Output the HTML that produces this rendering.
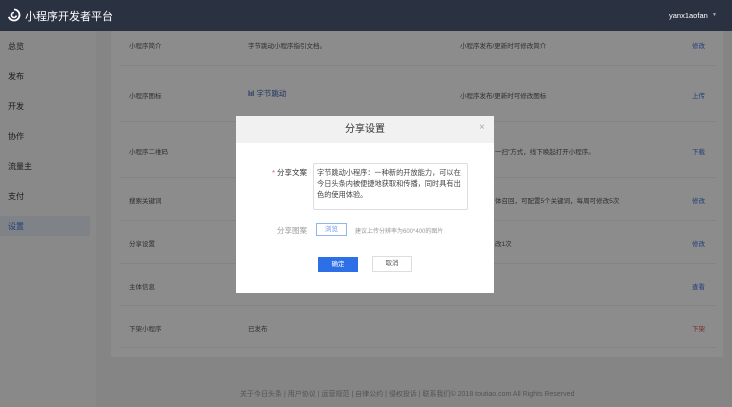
<!DOCTYPE html>
<html><head><meta charset="utf-8"><style>
*{margin:0;padding:0;box-sizing:border-box}
body{width:732px;height:407px;overflow:hidden;position:relative;background:#f2f2f2;font-family:"Liberation Sans","Noto Sans CJK SC",sans-serif;font-size:7px;color:#333}
.hd{position:absolute;left:0;top:0;width:732px;height:31px;background:#2a3242;color:#fff;z-index:5}
.side{position:absolute;left:0;top:31px;width:96px;height:376px;background:#fafafa}
.side div{position:absolute;left:8px;font-size:8px;color:#333}
.panel{position:absolute;left:111px;top:31px;width:612px;height:326px;background:#fff}
.row{position:absolute;left:9px;width:596px;border-bottom:1px solid #eee}
.t{position:absolute;font-size:6.5px;color:#555;white-space:nowrap}
.a{position:absolute;font-size:6.5px;color:#3b73d9}
.ov{position:absolute;left:0;top:0;width:732px;height:407px;background:rgba(0,0,0,.45)}
.m{position:absolute;left:236px;top:116px;width:258px;height:177px;background:#fff}
</style></head><body>
<div class="hd">
<svg style="position:absolute;left:7px;top:8px" width="14" height="14" viewBox="0 0 14 14"><path d="M7 1.5A5.5 5.5 0 1 1 1.8 8.8" fill="none" stroke="#fff" stroke-width="1.8"/><path d="M7 4.5A2.5 2.5 0 1 0 9.4 7.6" fill="none" stroke="#fff" stroke-width="1.6"/></svg>
<div style="position:absolute;left:25px;top:8px;font-size:11px">小程序开发者平台</div>
<div style="position:absolute;left:669px;top:11px;font-size:7.5px">yanx1aofan</div>
<div style="position:absolute;left:712px;top:12px;font-size:5px;color:#aaa">▼</div>
</div>
<div class="side">
<div style="top:10px">总览</div><div style="top:40px">发布</div><div style="top:70px">开发</div><div style="top:100px">协作</div><div style="top:130px">流量主</div><div style="top:160px">支付</div>
<div style="left:0;top:185px;width:90px;height:20px;background:#e8eef8"></div>
<div style="top:190px;color:#3b73d9">设置</div>
</div>
<div class="panel">
<div class="row" style="top:0;height:35px"></div>
<div class="row" style="top:35px;height:56px"></div>
<div class="row" style="top:91px;height:56px"></div>
<div class="row" style="top:147px;height:43px"></div>
<div class="row" style="top:190px;height:43px"></div>
<div class="row" style="top:233px;height:42px"></div>
<div class="row" style="top:275px;height:42px"></div>
<div class="t" style="left:18px;top:9px">小程序简介</div><div class="t" style="left:137px;top:9px">字节跳动小程序指引文档。</div><div class="t" style="left:349px;top:9px">小程序发布/更新时可修改简介</div><div class="a" style="left:581px;top:9px">修改</div>
<div class="t" style="left:18px;top:59px">小程序图标</div><div class="t" style="left:137px;top:57px;color:#3b5fb0;font-size:7.5px"><b>lıl</b> 字节跳动</div><div class="t" style="left:349px;top:59px">小程序发布/更新时可修改图标</div><div class="a" style="left:581px;top:59px">上传</div>
<div class="t" style="left:18px;top:115px">小程序二维码</div><div class="t" style="left:384px;top:115px">一扫"方式，线下唤起打开小程序。</div><div class="a" style="left:581px;top:115px">下载</div>
<div class="t" style="left:18px;top:164px">搜索关键词</div><div class="t" style="left:384px;top:164px">体召回，可配置5个关键词，每周可修改5次</div><div class="a" style="left:581px;top:164px">修改</div>
<div class="t" style="left:18px;top:207px">分享设置</div><div class="t" style="left:384px;top:207px">改1次</div><div class="a" style="left:581px;top:207px">修改</div>
<div class="t" style="left:18px;top:250px">主体信息</div><div class="a" style="left:581px;top:250px">查看</div>
<div class="t" style="left:18px;top:292px">下架小程序</div><div class="t" style="left:137px;top:292px">已发布</div><div class="a" style="left:581px;top:292px;color:#e05050">下架</div>
</div>
<div class="t" style="left:240px;top:389px;color:#999;font-size:7px">关于今日头条 | 用户协议 | 运营规范 | 自律公约 | 侵权投诉 | 联系我们© 2018 toutiao.com All Rights Reserved</div>
<div class="ov"></div>
<div class="m">
<div style="position:absolute;left:0;top:0;width:258px;height:27px;background:#f1f1f1;text-align:center;line-height:27px;font-size:10px;color:#333">分享设置</div>
<div style="position:absolute;left:243px;top:6px;font-size:10px;color:#aaa">×</div>
<div style="position:absolute;left:36px;top:51px;font-size:7.5px;color:#333"><span style="color:#e05050">*</span> 分享文案</div>
<div style="position:absolute;left:77px;top:47px;width:155px;height:47px;border:1px solid #ddd;border-radius:2px;padding:3px 3px;font-size:7.2px;line-height:11px;color:#444">字节跳动小程序：一种新的开放能力，可以在今日头条内被便捷地获取和传播，同时具有出色的使用体验。</div>
<div style="position:absolute;left:41px;top:109px;font-size:7.5px;color:#999">分享图案</div>
<div style="position:absolute;left:80px;top:107px;width:31px;height:13px;border:1px solid #8fb6ee;color:#6a9be3;font-size:6.5px;text-align:center;line-height:11px">浏览</div>
<div style="position:absolute;left:119px;top:110px;font-size:6px;color:#999">建议上传分辨率为600*400的图片</div>
<div style="position:absolute;left:82px;top:141px;width:40px;height:15px;background:#2c6fe6;color:#fff;font-size:6.5px;text-align:center;line-height:15px">确定</div>
<div style="position:absolute;left:136px;top:140px;width:40px;height:16px;border:1px solid #ddd;color:#555;font-size:6.5px;text-align:center;line-height:14px">取消</div>
</div>
</body></html>
